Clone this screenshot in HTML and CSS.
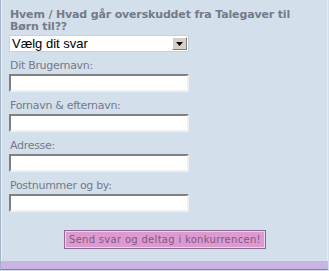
FILE: index.html
```html
<!DOCTYPE html>
<html lang="da">
<head>
<meta charset="utf-8">
<link rel="stylesheet" href="styles.css">
</head>
<body>
<div class="page">
  <form class="form">
    <div class="question">Hvem / Hvad går overskuddet fra Talegaver til Børn til??</div>
    <div class="select">
      <span class="select-text">Vælg dit svar</span>
      <span class="select-btn"><svg width="7" height="4" viewBox="0 0 7 4"><path d="M0 0H7L3.5 4Z" fill="#000"/></svg></span>
    </div>
    <label class="label">Dit Brugernavn:</label>
    <div class="input"></div>
    <label class="label">Fornavn &amp; efternavn:</label>
    <div class="input"></div>
    <label class="label">Adresse:</label>
    <div class="input"></div>
    <label class="label">Postnummer og by:</label>
    <div class="input"></div>
    <div class="actions">
      <button type="button" class="submit">Send svar og deltag i konkurrencen!</button>
    </div>
  </form>
  <div class="footer"></div>
</div>
</body>
</html>
```
FILE: styles.css
```css
html, body { margin: 0; padding: 0; }
body { width: 329px; height: 271px; overflow: hidden; background: #d3dfea; }
.page {
  width: 329px; height: 271px; box-sizing: border-box;
  display: flex; flex-direction: column;
  border-left: 1px solid #a6b2c6;
  border-right: 1px solid #d3dfea;
  background: #d3dfea;
  box-shadow: inset 1px 0 0 #e8eef5, inset -1px 0 0 #e6ecf4;
}
.form {
  flex: 1;
  padding: 9px 0 0 8px;
  display: flex; flex-direction: column;
  font-family: "DejaVu Sans", sans-serif;
  color: #757a8b;
}
.question { font-weight: bold; font-size: 11px; line-height: 12px; margin-left: 1px; width: 285px; letter-spacing: -0.15px; }
.select {
  margin-top: 2px;
  width: 180px; height: 17px; box-sizing: border-box;
  background: #fff; border: 1px solid #c8d2dc;
  display: flex; align-items: center; justify-content: space-between;
}
.select-text { font-family: "Liberation Sans", Arial, sans-serif; font-size: 13px; color: #000; padding-left: 2px; }
.select-btn {
  width: 15px; height: 13px; margin-right: 1px; box-sizing: border-box;
  background: #d4d0c8; border: 1px solid; border-color: #fff #808080 #808080 #fff;
  display: flex; align-items: center; justify-content: center;
}
.label { font-size: 11px; line-height: 13px; margin-top: 7px; margin-left: 1px; letter-spacing: -0.3px; }
.input {
  margin-top: 2px; width: 180px; height: 18px; box-sizing: border-box;
  background: #fff; border: 2px solid; border-color: #808080 #f0f0f0 #f0f0f0 #808080;
}
.actions { display: flex; margin-top: 18px; padding-left: 55px; }
.submit {
  margin: 0; padding: 0 4px; height: 19px;
  background: #dc9ad0; color: #7e5a82;
  border: 1px solid #8a6a8e; box-shadow: inset 1px 1px 0 #f2d0ec, inset -1px -1px 0 #f2d0ec;
  font-family: "DejaVu Sans", sans-serif; font-size: 10px; letter-spacing: 0.3px;
}
.footer { height: 8px; background: #c9b4e4; border-bottom: 1px solid #8a7aa6; margin-bottom: 1px; }
```
